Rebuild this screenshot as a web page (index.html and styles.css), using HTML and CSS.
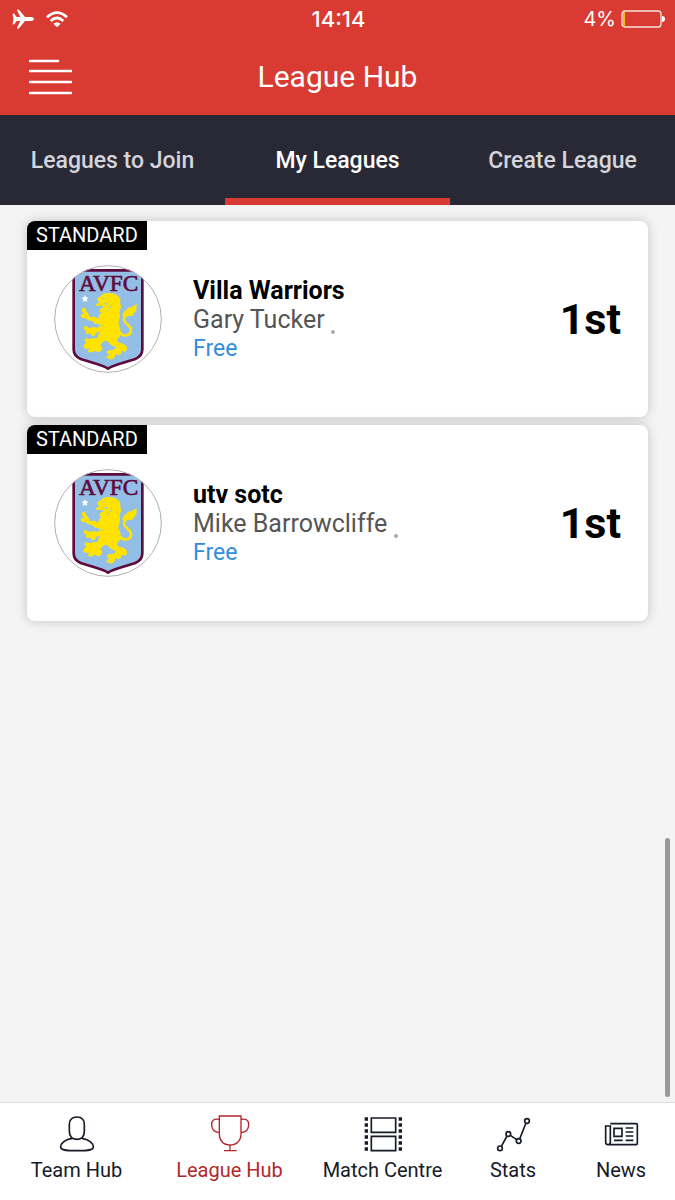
FILE: index.html
```
<!DOCTYPE html>
<html lang="en">
<head>
    <meta charset="UTF-8">
    <meta name="viewport" content="width=device-width, initial-scale=1.0">
    <title>League Hub</title>
    <link rel="stylesheet" href="styles.css">
</head>
<body>

<div class="app">
    <header class="header">
        <div class="status-bar">
            <div class="status-left">
                <svg width="22" height="20" viewBox="0 0 66 60" aria-label="Airplane mode">
                    <path d="M2 14Q6 13 8 16L14 24H25L15 4Q14 0 21 2L39 24H59Q66 26 66 30Q66 34 59 36H39L21 58Q14 61 15 56L25 36H14L8 44Q6 47 2 46L4 30Z" fill="#fff"/>
                </svg>
                <svg width="22" height="17" viewBox="0 0 66 51" aria-label="Wi-Fi">
                    <path d="M3 19Q33-9 63 19M14 30Q33 12 52 30" fill="none" stroke="#fff" stroke-width="8"/>
                    <path d="M22 38Q33 29 44 38L33 49Z" fill="#fff"/>
                </svg>
            </div>
            <span class="clock">14:14</span>
            <div class="status-right">
                <span>4%</span>
                <svg width="44" height="18" viewBox="0 0 44 18" aria-label="Battery">
                    <rect x="1" y="1" width="39" height="16" rx="3" fill="none" stroke="#f8e8dd" stroke-width="1.3"/>
                    <rect x="2" y="2" width="2" height="14" fill="#f6bd10"/>
                    <path d="M41 6Q44 6 44 9Q44 12 41 12Z" fill="#fff"/>
                </svg>
            </div>
        </div>
        <div class="title-bar">
            <button class="menu-button" type="button" aria-label="Menu">
                <svg width="43" height="36" viewBox="0 0 43 36">
                    <path d="M1 2H29M1 12H42M1 23H42M1 34H42" stroke="#fff" stroke-width="2.6" stroke-linecap="round"/>
                </svg>
            </button>
            <h1>League Hub</h1>
        </div>
    </header>

    <nav class="tabs">
        <a href="#join">Leagues to Join</a>
        <a href="#mine" class="active">My Leagues</a>
        <a href="#create">Create League</a>
    </nav>

    <main class="content">
        <article class="card">
            <span class="badge">STANDARD</span>
            <div class="card-body">
                <svg class="crest" viewBox="42 30 324 324" role="img" aria-label="AVFC crest">
                    <clipPath id="crest-clip"><circle cx="204" cy="192" r="161"/></clipPath>
                    <g id="crest">
                        <g clip-path="url(#crest-clip)">
                            <path d="M101 46H307V283C307 298 298 307 286 312L235 328Q215 334 204 341Q193 334 173 328L122 312C110 307 101 298 101 283Z" fill="#93bfe6" stroke="#5e0b3c" stroke-width="8"/>
                            <text x="206" y="107" text-anchor="middle" class="crest-text">AVFC</text>
                            <path d="M135 120L138 127L146 128L140 133L142 141L135 137L128 141L130 133L124 128L132 127Z" fill="#fff"/>
                            <!-- Lion: body, then tail and tuft -->
                            <path d="M174 128L182 124Q186 116 197 115Q214 112 226 118Q239 124 242 137L240 144Q246 153 241 162L238 170Q243 180 238 192Q233 203 237 212Q244 224 242 236Q240 247 231 253Q229 261 241 264L251 266Q261 272 262 281L256 291L246 287L242 298L234 301L227 296L224 306L215 314L201 310L199 304L208 299L200 294L204 286L219 285L229 277L218 272Q207 269 203 259L194 258Q184 264 181 270L188 279L180 291L171 290L164 287L154 293L144 290L145 284L152 279L138 283L130 276L133 268L139 263L133 255L138 249L149 252L163 249L173 248Q173 239 180 233L174 231L168 235L163 243L155 242L151 235L143 238L137 234L139 227L131 222L132 214L140 214L147 219L160 216L171 218L180 214L175 206L166 207L157 199L144 196L137 189L129 190L121 183L124 177L133 178L125 168L128 159L134 158L139 168L146 177L150 186L164 185L175 191L177 181L184 172L177 169L180 162L191 157L188 153L169 153L168 147L178 142L171 134Z" fill="#ffe300"/>
                            <path d="M240 232C249 248 274 242 273 225C272 211 253 206 252 195C251 188 256 184 261 179" fill="none" stroke="#ffe300" stroke-width="8"/>
                            <path d="M247 181Q249 169 261 163Q264 154 272 158Q281 151 292 147Q286 154 290 163Q286 173 278 178L281 181Q270 186 258 181L252 186Z" fill="#ffe300"/>
                            <path d="M189 147L201 145L198 152M186 131L194 128M215 147Q212 162 199 170M181 216L190 211" fill="none" stroke="#93bfe6" stroke-width="2"/>
                        </g>
                        <circle cx="204" cy="192" r="160" fill="none" stroke="#b3aeb1" stroke-width="3"/>
                    </g>
                </svg>
                <div class="info">
                    <h2>Villa Warriors</h2>
                    <p class="owner">Gary Tucker <span class="dot"></span></p>
                    <p class="price">Free</p>
                </div>
                <strong class="rank">1st</strong>
            </div>
        </article>

        <article class="card">
            <span class="badge">STANDARD</span>
            <div class="card-body">
                <svg class="crest" viewBox="42 30 324 324" role="img" aria-label="AVFC crest"><use href="#crest"/></svg>
                <div class="info">
                    <h2>utv sotc</h2>
                    <p class="owner">Mike Barrowcliffe <span class="dot"></span></p>
                    <p class="price">Free</p>
                </div>
                <strong class="rank">1st</strong>
            </div>
        </article>

        <div class="scroll-thumb"></div>
    </main>

    <nav class="bottom-nav">
        <a href="#team">
            <svg viewBox="0 0 120 120">
                <path d="M60 9C44 9 37 18 37 32V51C37 66 45 76 60 76S82 66 82 51V32C82 18 75 9 60 9ZM46 73C25 76 11 87 11 99C11 107 20 110 60 110S109 107 109 99C109 87 95 76 74 73"/>
            </svg>
            <span>Team Hub</span>
        </a>
        <a href="#league" class="active">
            <svg viewBox="0 0 120 120">
                <path class="thin" d="M28 6H93V60C93 80 80 93 60 93S28 80 28 60ZM28 16C12 13 5 19 5 32C5 46 12 54 28 56M93 16C109 13 116 19 116 32C116 46 109 54 93 56M60 93V110M42 110H80"/>
            </svg>
            <span>League Hub</span>
        </a>
        <a href="#match">
            <svg viewBox="0 0 120 120">
                <path d="M25 12H98V55H25ZM25 67H98V110H25Z"/>
                <path class="film" d="M10 10V113M112 10V113"/>
            </svg>
            <span>Match Centre</span>
        </a>
        <a href="#stats">
            <svg viewBox="0 0 120 120">
                <path d="M25 97L42 66M52 64L71 77M80 75L99 27"/>
                <circle cx="21" cy="103" r="7"/><circle cx="46" cy="60" r="7"/><circle cx="77" cy="81" r="7"/><circle cx="102" cy="21" r="7"/>
            </svg>
            <span>Stats</span>
        </a>
        <a href="#news">
            <svg viewBox="0 0 120 120">
                <path d="M28 29H106Q109 29 109 32V88Q109 92 105 92H21Q14 92 14 85V36H28V85Q28 92 21 92M39 43H63V67H39ZM74 42H97M74 54H97M74 66H97M39 79H65M74 79H97"/>
            </svg>
            <span>News</span>
        </a>
    </nav>
</div>

</body>
</html>
```
FILE: styles.css
```
* {
    box-sizing: border-box;
    margin: 0;
    padding: 0;
}

body {
    font-family: Roboto, Arial, sans-serif;
    background-color: #f4f4f4;
    color: #000;
}

a {
    color: inherit;
    text-decoration: none;
}

.app {
    display: flex;
    flex-direction: column;
    min-height: 100vh;
}

/* Header */
.header {
    background-color: #d93a32;
    color: #fff;
}

.status-bar {
    display: grid;
    grid-template-columns: 1fr auto 1fr;
    align-items: center;
    padding: 5px 10px 5px 12px;
    font-family: Inter, sans-serif;
    font-size: 20px;
    line-height: 28px;
}

.status-left,
.status-right {
    display: flex;
    align-items: center;
    gap: 12px;
}

.status-right {
    justify-content: flex-end;
    gap: 5px;
}

.clock {
    font-size: 22px;
    font-weight: 500;
}

.title-bar {
    display: grid;
    grid-template-columns: 1fr auto 1fr;
    align-items: center;
    padding: 0 29px;
    min-height: 77px;
}

.menu-button {
    justify-self: start;
    background: none;
    border: none;
    cursor: pointer;
}

.menu-button svg {
    display: block;
}

.title-bar h1 {
    font-size: 30px;
    font-weight: 400;
}

/* Tabs */
.tabs {
    display: grid;
    grid-template-columns: repeat(3, 1fr);
    background-color: #292935;
    color: #d4d4dc;
    font-size: 23px;
    font-weight: 500;
    line-height: 28px;
    text-align: center;
}

.tabs a {
    padding: 32px 0 23px;
    border-bottom: 7px solid transparent;
}

.tabs .active {
    color: #fff;
    border-color: #d93a32;
}

/* League cards */
.content {
    position: relative;
    flex: 1;
    display: flex;
    flex-direction: column;
    gap: 8px;
    padding: 16px 27px;
}

.card {
    background-color: #fff;
    border-radius: 8px;
    box-shadow: 0 0 12px rgba(0, 0, 0, 0.2);
    overflow: hidden;
}

.badge {
    display: block;
    width: fit-content;
    padding: 0 9px 1px;
    background-color: #000;
    color: #fff;
    font-size: 20px;
    line-height: 28px;
}

.card-body {
    display: flex;
    align-items: center;
    padding: 15px 27px 44px;
}

.crest {
    width: 108px;
    height: 108px;
}

.crest-text {
    font-family: "Liberation Serif", serif;
    font-size: 70px;
    fill: #5e0b3c;
    stroke: #5e0b3c;
    stroke-width: 2px;
}

.info {
    flex: 1;
    padding: 1px 0 0 31px;
    font-size: 25px;
    line-height: 29px;
}

.info h2 {
    font-size: 25px;
    font-weight: 700;
}

.owner {
    color: #555;
}

.dot {
    display: inline-block;
    width: 4px;
    height: 4px;
    border-radius: 50%;
    background-color: #aaa;
    vertical-align: -6px;
}

.price {
    color: #318ddd;
    font-size: 23px;
}

.rank {
    font-size: 43px;
}

.scroll-thumb {
    position: absolute;
    right: 5px;
    bottom: 5px;
    width: 5px;
    height: 259px;
    border-radius: 3px;
    background-color: #999;
}

/* Bottom navigation */
.bottom-nav {
    display: grid;
    grid-template-columns: 17fr 17fr 17fr 12fr 12fr;
    background-color: #fff;
    border-top: 1px solid #ddd;
    color: #171b28;
    font-size: 20px;
    line-height: 24px;
}

.bottom-nav a {
    display: flex;
    flex-direction: column;
    align-items: center;
    gap: 4px;
    padding: 11px 0 18px;
}

.bottom-nav svg {
    width: 40px;
    height: 40px;
    fill: none;
    stroke: currentColor;
    stroke-width: 5;
}

.bottom-nav .thin {
    stroke-width: 4;
}

.bottom-nav .film {
    stroke-width: 10;
    stroke-dasharray: 10 8;
}

.bottom-nav .active {
    color: #b3272b;
}
```
